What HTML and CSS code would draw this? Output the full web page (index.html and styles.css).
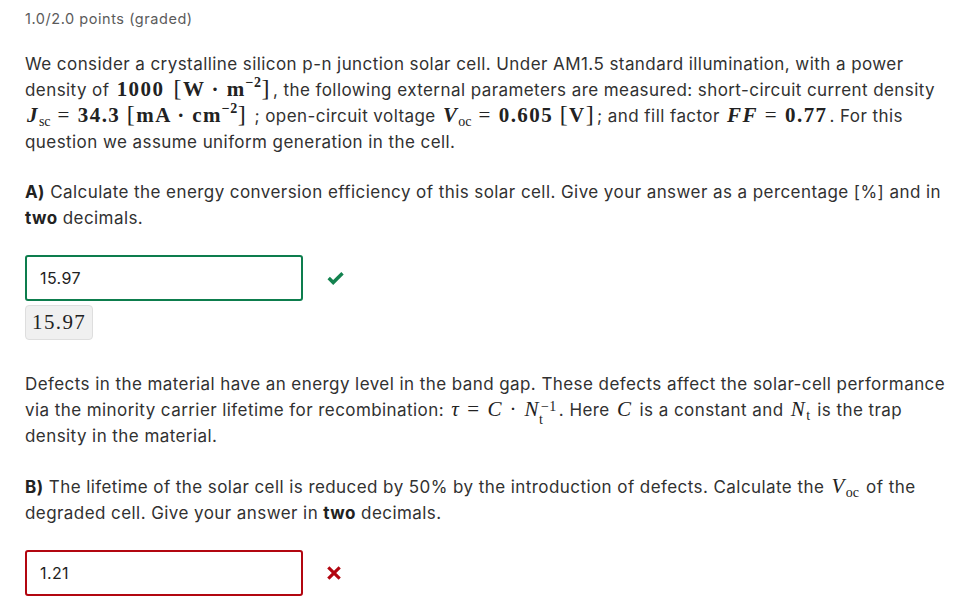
FILE: index.html
```html
<!DOCTYPE html>
<html>
<head>
<meta charset="utf-8">
<link rel="stylesheet" href="styles.css">
</head>
<body>
<div class="problem">
  <div class="points">1.0/2.0 points (graded)</div>
  <p class="para first">We consider a crystalline silicon p-n junction solar cell. Under AM1.5 standard illumination, with a power density of <span class="m b">1000</span> <span class="m b"><span class="br">[</span>W · m<sup>−2</sup><span class="br">]</span></span>, the following external parameters are measured: short-circuit current density <span class="m b"><i>J</i><sub>sc</sub><span class="op">=</span>34.3 <span class="br">[</span>mA · cm<sup>−2</sup><span class="br">]</span></span> ; open-circuit voltage <span class="m b"><i>V</i><sub>oc</sub><span class="op">=</span>0.605 <span class="br">[</span>V<span class="br">]</span></span>; and fill factor <span class="m b"><i>FF</i><span class="op">=</span>0.77</span>. For this question we assume uniform generation in the cell.</p>
  <p class="para q">
    <strong>A)</strong> Calculate the energy conversion efficiency of this solar cell. Give your answer as a percentage [%] and in <strong>two</strong> decimals.
  </p>
  <div class="answer-row">
    <div class="input correct">15.97</div>
    <svg class="icon" width="19" height="17" viewBox="0 0 19 17"><path d="M1.5 9.2 L3.9 6.8 L7.2 10.1 L15.3 2 L17.7 4.4 L7.2 14.9 Z" fill="#13824f"/></svg>
  </div>
  <div class="preview"><span class="m">15.97</span></div>
  <p class="para defects">Defects in the material have an energy level in the band gap. These defects affect the solar-cell performance via the minority carrier lifetime for recombination: <span class="m"><i>τ</i><span class="op">=</span><i>C</i> · <i>N</i><span class="supsub"><span class="sp">−1</span><span class="sb">t</span></span></span>. Here <span class="m"><i>C</i></span> is a constant and <span class="m"><i>N</i><sub>t</sub></span> is the trap density in the material.</p>
  <p class="para q qb">
    <strong>B)</strong> The lifetime of the solar cell is reduced by 50% by the introduction of defects. Calculate the <span class="m"><i>V</i><sub>oc</sub></span> of the degraded cell. Give your answer in <strong>two</strong> decimals.
  </p>
  <div class="answer-row">
    <div class="input wrong">1.21</div>
    <svg class="icon" width="16" height="16" viewBox="0 0 16 16"><path d="M3.4 1.2 L8 5.8 L12.6 1.2 L14.8 3.4 L10.2 8 L14.8 12.6 L12.6 14.8 L8 10.2 L3.4 14.8 L1.2 12.6 L5.8 8 L1.2 3.4 Z" fill="#b20610"/></svg>
  </div>
  <div class="preview"></div>
</div>
</body>
</html>
```

FILE: styles.css
```css
html, body {
  margin: 0;
  padding: 0;
  background: #fff;
}
body {
  font-family: Inter, "Noto Sans", sans-serif;
  color: #313131;
  font-size: 16px;
}
.problem {
  padding: 10px 20px 0 25px;
  width: 931px;
}
.points {
  font-size: 14.5px;
  color: #5b5b5b;
  line-height: 18px;
  letter-spacing: 0.55px;
}
.para {
  margin: 0;
  font-size: 17px;
  line-height: 26px;
  letter-spacing: 0.43px;
}
.first {
  margin-top: 23px;
}
.q {
  margin-top: 24px;
}
.qb {
  margin-top: 25px;
}
.defects {
  margin-top: 31px;
}
.m {
  font-family: "Liberation Serif", "DejaVu Serif", serif;
  font-size: 21px;
  color: #222;
  white-space: nowrap;
  line-height: 0;
  letter-spacing: 1.4px;
  margin: 0 2px;
}
.m.b {
  font-weight: bold;
}
.m i {
  font-style: italic;
}
.op {
  margin: 0 7px;
  font-weight: normal;
}
.m sup {
  font-size: 14px;
  vertical-align: 9px;
  line-height: 0;
  letter-spacing: 0.5px;
}
.m sub {
  font-size: 14px;
  vertical-align: -4px;
  line-height: 0;
  font-weight: normal;
  letter-spacing: 0;
}
.br {
  font-weight: normal;
  font-size: 24px;
  line-height: 0;
}
.supsub {
  display: inline-block;
  vertical-align: -8px;
  font-size: 14px;
  line-height: 13px;
  margin: -6px 0 -6px 1px;
  letter-spacing: 0.5px;
}
.supsub .sp, .supsub .sb {
  display: block;
}
.supsub .sb {
  margin-left: -2px;
}
strong {
  font-weight: 700;
  color: #222;
}
.answer-row {
  display: flex;
  align-items: center;
  gap: 23px;
  margin-top: 24px;
}
.input {
  box-sizing: border-box;
  width: 278px;
  height: 46px;
  border: 2px solid #0d7d4d;
  border-radius: 3px;
  padding: 0 13px;
  display: flex;
  align-items: center;
  font-size: 16px;
  letter-spacing: 0.4px;
  color: #222;
}
.input.correct {
  border-color: #0d7d4d;
}
.input.wrong {
  border-color: #b20610;
}
.preview {
  display: inline-block;
  margin-top: 4px;
  background: #f0f0f0;
  border: 1px solid #dedede;
  border-radius: 4px;
  padding: 6px 6px 5px;
  min-width: 52px;
  min-height: 22px;
}
.preview .m {
  font-size: 21px;
  font-weight: normal;
  margin: 0;
  line-height: 1;
}
```
